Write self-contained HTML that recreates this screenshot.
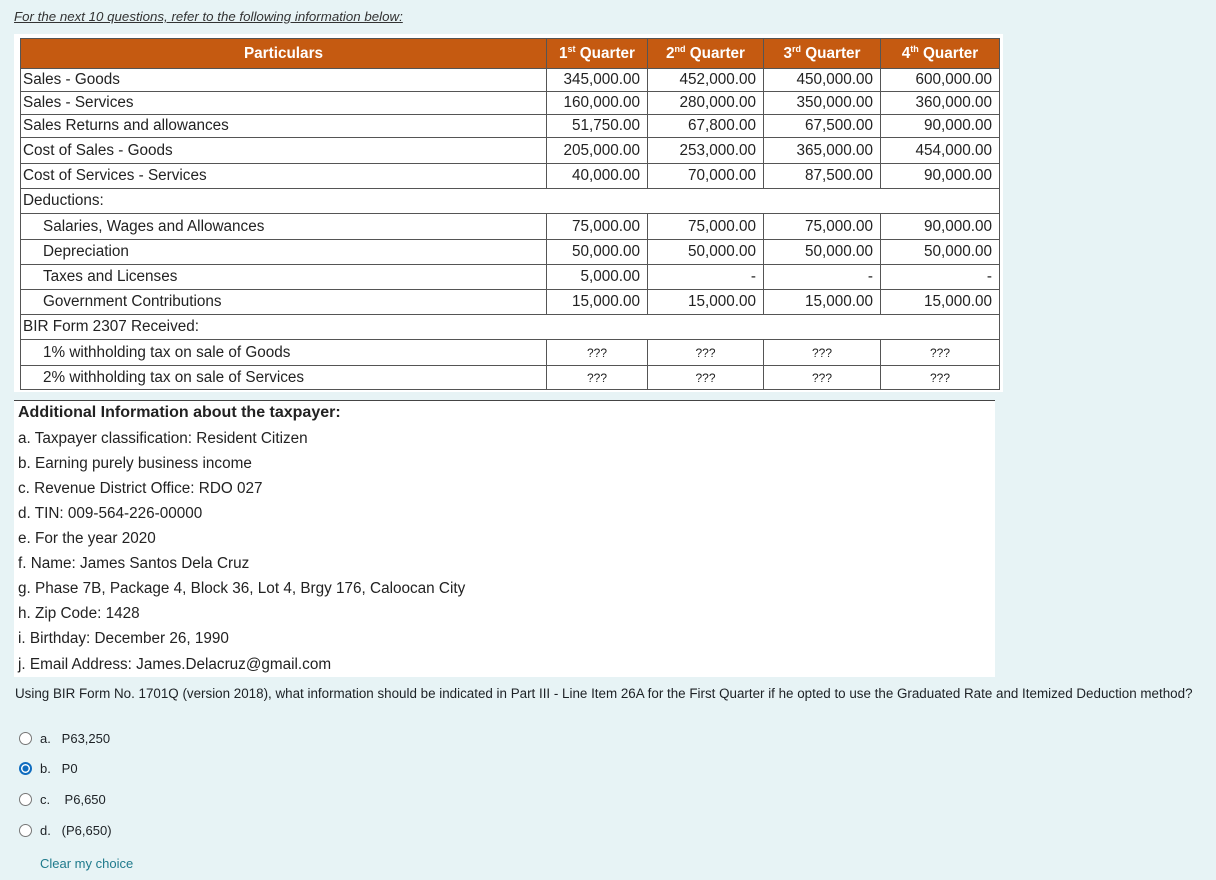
<!DOCTYPE html>
<html><head><meta charset="utf-8"><style>
body{margin:0;background:#e7f3f5;font-family:"Liberation Sans",sans-serif;color:#1d2125;width:1216px;height:880px;position:relative;overflow:hidden}
.a{position:absolute}
.top{left:14px;top:9px;font-size:13.3px;font-style:italic;text-decoration:underline;color:#333}
.box{left:14px;top:34px;width:989px;height:358px;background:#fff}
table{position:absolute;left:20px;top:38px;border-collapse:collapse;font-size:15.3px;color:#222}
td{border:1px solid #555;padding:0 2px;height:22px;line-height:20px;white-space:nowrap}
th{background:#c55a11;color:#fff;font-weight:bold;font-size:15.3px;height:27px;border:1px solid #555;text-align:center}
td.n{text-align:right;padding-right:7px}
td.q{text-align:center;font-size:12px}
.ind{padding-left:22px}
.info{left:14px;top:400px;width:981px;height:276px;background:#fff;border-top:1px solid #444;font-size:15.3px;color:#222}
.info div{position:absolute;left:4px}
.q1{left:15px;top:686px;font-size:13.4px}
.opt{left:19px;font-size:13px}
.r{display:inline-block;width:13px;height:13px;border:1px solid #777;border-radius:50%;vertical-align:-2px;margin-right:8px;background:#fff;box-sizing:border-box}
.r.on{border:2px solid #0f6cbf;background:radial-gradient(#0f6cbf 45%,#fff 50%)}
</style></head><body>
<div class="a top">For the next 10 questions, refer to the following information below:</div>
<div class="a box"></div>
<table>
<colgroup><col style="width:526px"><col style="width:101px"><col style="width:116px"><col style="width:117px"><col style="width:119px"></colgroup>
<tr><th>Particulars</th><th>1<sup style="font-size:9px">st</sup> Quarter</th><th>2<sup style="font-size:9px">nd</sup> Quarter</th><th>3<sup style="font-size:9px">rd</sup> Quarter</th><th>4<sup style="font-size:9px">th</sup> Quarter</th></tr>
<tr><td>Sales - Goods</td><td class="n">345,000.00</td><td class="n">452,000.00</td><td class="n">450,000.00</td><td class="n">600,000.00</td></tr>
<tr><td>Sales - Services</td><td class="n">160,000.00</td><td class="n">280,000.00</td><td class="n">350,000.00</td><td class="n">360,000.00</td></tr>
<tr><td>Sales Returns and allowances</td><td class="n">51,750.00</td><td class="n">67,800.00</td><td class="n">67,500.00</td><td class="n">90,000.00</td></tr>
<tr style="height:26px"><td>Cost of Sales - Goods</td><td class="n">205,000.00</td><td class="n">253,000.00</td><td class="n">365,000.00</td><td class="n">454,000.00</td></tr>
<tr style="height:25px"><td>Cost of Services - Services</td><td class="n">40,000.00</td><td class="n">70,000.00</td><td class="n">87,500.00</td><td class="n">90,000.00</td></tr>
<tr style="height:25px"><td colspan="5">Deductions:</td></tr>
<tr style="height:26px"><td class="ind">Salaries, Wages and Allowances</td><td class="n">75,000.00</td><td class="n">75,000.00</td><td class="n">75,000.00</td><td class="n">90,000.00</td></tr>
<tr style="height:25px"><td class="ind">Depreciation</td><td class="n">50,000.00</td><td class="n">50,000.00</td><td class="n">50,000.00</td><td class="n">50,000.00</td></tr>
<tr style="height:25px"><td class="ind">Taxes and Licenses</td><td class="n">5,000.00</td><td class="n">-</td><td class="n">-</td><td class="n">-</td></tr>
<tr style="height:25px"><td class="ind">Government Contributions</td><td class="n">15,000.00</td><td class="n">15,000.00</td><td class="n">15,000.00</td><td class="n">15,000.00</td></tr>
<tr style="height:25px"><td colspan="5">BIR Form 2307 Received:</td></tr>
<tr style="height:26px"><td class="ind">1% withholding tax on sale of Goods</td><td class="q">???</td><td class="q">???</td><td class="q">???</td><td class="q">???</td></tr>
<tr style="height:24px"><td class="ind">2% withholding tax on sale of Services</td><td class="q">???</td><td class="q">???</td><td class="q">???</td><td class="q">???</td></tr>
</table>
<div class="a info">
<div style="top:3px;font-weight:bold;font-size:16px">Additional Information about the taxpayer:</div>
<div style="top:29px">a. Taxpayer classification: Resident Citizen</div>
<div style="top:54px">b. Earning purely business income</div>
<div style="top:79px">c. Revenue District Office: RDO 027</div>
<div style="top:104px">d. TIN: 009-564-226-00000</div>
<div style="top:129px">e. For the year 2020</div>
<div style="top:154px">f. Name: James Santos Dela Cruz</div>
<div style="top:179px">g. Phase 7B, Package 4, Block 36, Lot 4, Brgy 176, Caloocan City</div>
<div style="top:204px">h. Zip Code: 1428</div>
<div style="top:229px">i. Birthday: December 26, 1990</div>
<div style="top:255px">j. Email Address: James.Delacruz@gmail.com</div>
</div>
<div class="a q1">Using BIR Form No. 1701Q (version 2018), what information should be indicated in Part III - Line Item 26A for the First Quarter if he opted to use the Graduated Rate and Itemized Deduction method?</div>
<div class="a opt" style="top:731px"><span class="r"></span>a.&nbsp;&nbsp;&nbsp;P63,250</div>
<div class="a opt" style="top:761px"><span class="r on"></span>b.&nbsp;&nbsp;&nbsp;P0</div>
<div class="a opt" style="top:792px"><span class="r"></span>c.&nbsp;&nbsp;&nbsp;&nbsp;P6,650</div>
<div class="a opt" style="top:823px"><span class="r"></span>d.&nbsp;&nbsp;&nbsp;(P6,650)</div>
<div class="a" style="left:40px;top:856px;font-size:13px;color:#1f7a8c">Clear my choice</div>
</body></html>
